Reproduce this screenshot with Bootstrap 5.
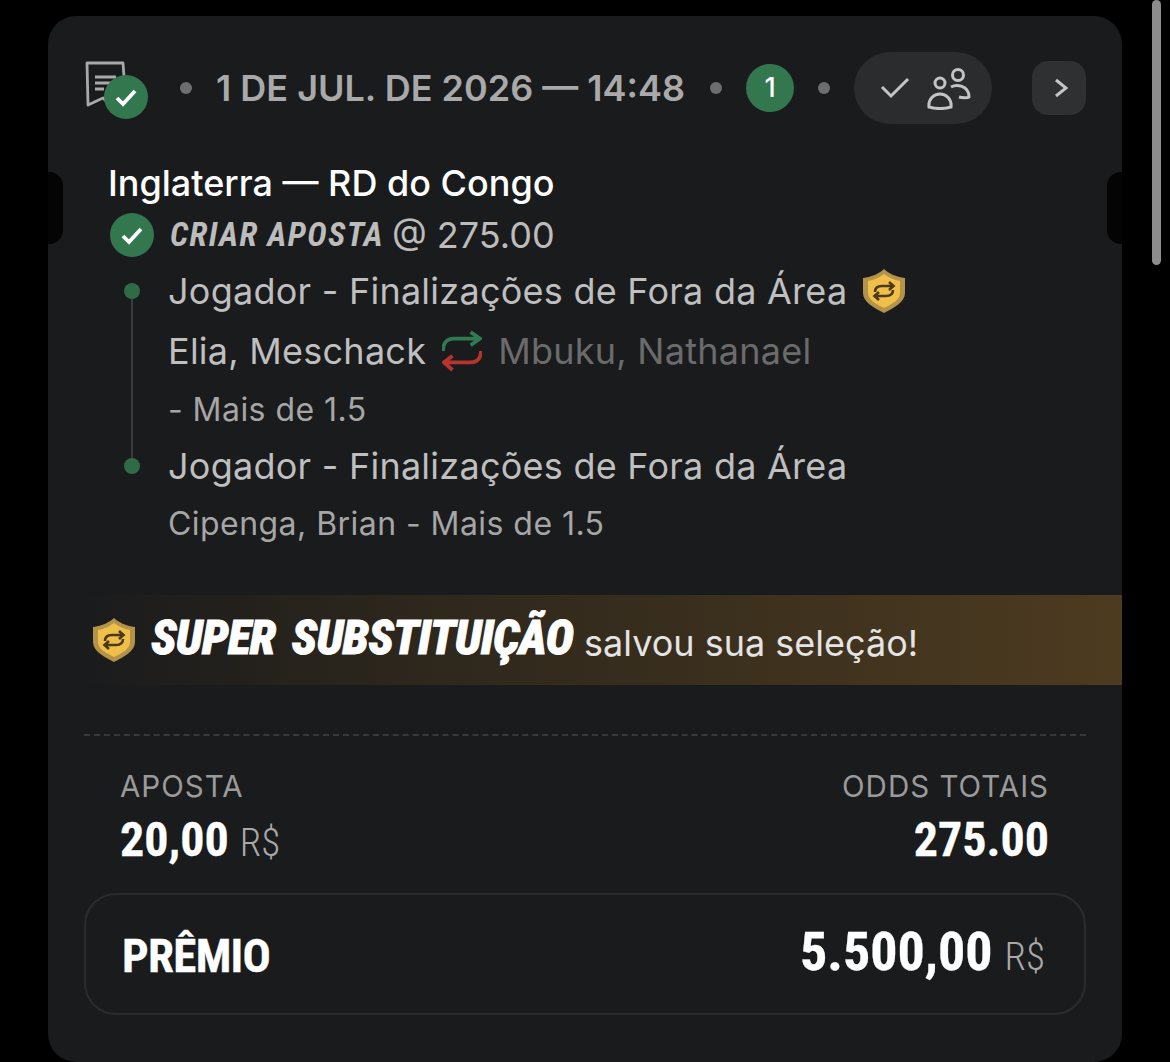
<!DOCTYPE html>
<html lang="pt-br">
<head>
    <meta charset="UTF-8">
    <meta name="viewport" content="width=device-width, initial-scale=1.0">
    <title>Aposta</title>
    <link href="https://cdn.jsdelivr.net/npm/bootstrap@5.3.0/dist/css/bootstrap.min.css" rel="stylesheet">
    <style>
        body { background: #000; font-family: Inter, "Liberation Sans", sans-serif; overflow: hidden; }
        .bet-card { position: relative; width: 1074px; height: 1046px; margin: 16px 0 0 48px; padding: 36px 36px 48px; background: #1a1b1d; border-radius: 28px; overflow: hidden; }
        .notch { position: absolute; top: 156px; width: 15px; height: 72px; background: #040404; }
        .notch-l { left: 0; border-radius: 0 14px 14px 0; }
        .notch-r { right: 0; border-radius: 14px 0 0 14px; }
        .page-scroll { position: absolute; left: 1152px; top: 0; width: 9px; height: 265px; background: #8c8c8c; border-radius: 5px; }

        .top-row { height: 72px; }
        .sep { width: 12px; height: 12px; border-radius: 50%; background: #6b6f72; flex: none; margin-left: 24px; }
        .sep-first { margin-left: 30px; margin-right: 24px; }
        .sep-mid { margin-left: 25px; }
        .date-txt { font-size: 36px; font-weight: 600; color: #a9a9a9; white-space: nowrap; }
        .num-dot { width: 48px; height: 48px; margin-left: 24px; border-radius: 50%; background: #33774f; color: #fff; font-size: 27px; font-weight: 500; }
        .share-pill { width: 138px; height: 72px; margin-left: 24px; padding-left: 8px; border-radius: 36px; background: #2a2c2e; }
        .next-btn { width: 54px; height: 54px; padding-left: 3px; border-radius: 16px; background: #2e3032; }

        .match-title { margin: 35px 0 0 24px; font-size: 36px; line-height: 48px; font-weight: 500; color: #fff; }
        .market-row { height: 55px; margin-left: 26px; }
        .market-name { font-family: "Roboto Condensed", "Liberation Sans Narrow", sans-serif; font-stretch: condensed; font-style: italic; font-weight: 700; font-size: 33px; color: #bcbcbc; letter-spacing: 1.350px; }
        .market-odd { font-size: 36px; color: #bcbcbc; }

        .leg { margin-left: 24px; }
        .rail { width: 48px; flex: none; }
        .rail-dot { width: 16px; height: 16px; border-radius: 50%; background: #2f6b47; margin-top: 21px; flex: none; }
        .rail-line { width: 2px; flex-grow: 1; background: #3a3c3e; }
        .rail-top { flex: none; height: 20px; }
        .rail-dot-low { margin-top: 0; }
        .leg-body { margin-left: 12px; }
        .leg-line { height: 58px; font-size: 36px; letter-spacing: .25px; color: #bfbfbf; white-space: nowrap; }
        .leg-tall { height: 62px; }
        .leg-short { height: 56px; }
        .leg-last { height: 60px; }
        .leg-sub { font-size: 32px; letter-spacing: .45px; color: #a6a6a6; }
        .leg-off { color: #6b6b6b; }

        .super-banner { height: 90px; margin: 41px -36px 0 -9px; padding-left: 18px; background: linear-gradient(90deg, #1a1b1d 0%, #2c261c 30%, #4d3b20 100%); }
        .super-name { margin-bottom: 5px; font-family: "Roboto Condensed", "Liberation Sans Narrow", sans-serif; font-stretch: condensed; font-style: italic; font-weight: 900; font-size: 48px; color: #fff; letter-spacing: -.8px; word-spacing: 6px; -webkit-text-stroke: .8px #fff; }
        .super-rest { margin-top: 6px; margin-left: 11px; font-size: 36px; color: #e4e4e4; }

        .dash-line { margin-top: 49px; border-top: 2px dashed #37393b; }
        .stats { padding: 32px 37px 0 36px; }
        .stat-label { font-size: 29.500px; line-height: 36px; color: #9a9a9a; letter-spacing: 1px; }
        .stat-value { height: 66px; gap: 11px; }
        .big-num { font-family: "Roboto Condensed", "Liberation Sans Narrow", sans-serif; font-stretch: condensed; font-weight: 700; font-size: 48px; color: #fff; -webkit-text-stroke: .3px #fff; }
        .cur { font-family: "Roboto Condensed", "Liberation Sans Narrow", sans-serif; font-stretch: condensed; font-weight: 300; font-size: 39px; color: #a8a8a8; }
        .prize-box { height: 122px; margin-top: 23px; padding: 0 39px 0 36px; border: 2px solid #2a2c2e; border-radius: 32px; }
        .prize-name { margin-top: 4px; font-family: "Roboto Condensed", "Liberation Sans Narrow", sans-serif; font-stretch: condensed; font-weight: 700; font-size: 47px; letter-spacing: -.7px; color: #fff; -webkit-text-stroke: .3px #fff; }
        .prize-amount { gap: 12px; padding-bottom: 6px; }
        .prize-num { font-size: 54px; }
    </style>
</head>
<body>
    <svg width="0" height="0" class="d-block">
        <symbol id="shield" viewBox="0 0 42 44">
            <path d="M21 0C25 4 33 8 42 9V24C42 33 31 39 21 44C11 39 0 33 0 24V9C9 8 17 4 21 0Z" fill="#b3924a"/>
            <path d="M21 5C25 8 31 11 37 12V24C37 31 29 35 21 39C13 35 5 31 5 24V12C11 11 17 8 21 5Z" fill="#efbf4a"/>
            <path d="M12 23C12 18 15 17 19 17H30M26 13L30.500 17L26 21M30 21C30 26 27 27 23 27H12M16 23L11.500 27L16 31" fill="none" stroke="#4a3a14" stroke-width="2.600"/>
        </symbol>
        <symbol id="okdot" viewBox="0 0 44 44">
            <circle cx="22" cy="22" r="22" fill="#33774f"/>
            <path d="M13 23L19 29L31 16" fill="none" stroke="#fff" stroke-width="3.800"/>
        </symbol>
    </svg>

    <div class="page-scroll"></div>

    <div class="bet-card">
        <div class="notch notch-l"></div>
        <div class="notch notch-r"></div>

        <!-- cabecalho -->
        <div class="top-row d-flex align-items-center">
            <svg width="66" height="64" viewBox="0 0 66 64" class="flex-shrink-0">
                <path d="M3 7H39L41 34L28 38L24 47L19 42L4 49Z" fill="none" stroke="#a9a9a9" stroke-width="2.800" stroke-linejoin="round"/>
                <path d="M11 21H32M11 27H28M11 33H20" stroke="#a9a9a9" stroke-width="3"/>
                <use href="#okdot" x="20" y="19" width="44" height="44"/>
            </svg>
            <span class="sep sep-first"></span>
            <span class="date-txt">1 DE JUL. DE 2026 — 14:48</span>
            <span class="sep sep-mid"></span>
            <span class="num-dot d-flex align-items-center justify-content-center">1</span>
            <span class="sep"></span>
            <span class="share-pill d-flex align-items-center justify-content-center gap-3">
                <svg width="30" height="24" viewBox="0 0 30 24"><path d="M2 11L11 20L28 3" fill="none" stroke="#c4c4c4" stroke-width="3"/></svg>
                <svg width="48" height="44" viewBox="0 0 48 44" fill="none" stroke="#c4c4c4" stroke-width="3">
                    <circle cx="14" cy="17" r="5"/>
                    <path d="M3 41C2 33 8 28 14 28C20 28 26 33 25 41C18 43 10 43 3 41Z"/>
                    <circle cx="32" cy="9" r="5.500"/>
                    <path d="M25 21C30 18 43 19 43 31C42 32 36 32 33 31"/>
                </svg>
            </span>
            <span class="next-btn d-flex align-items-center justify-content-center ms-auto">
                <svg width="14" height="20" viewBox="0 0 14 20"><path d="M2 2L12 10L2 18" fill="none" stroke="#c4c4c4" stroke-width="3"/></svg>
            </span>
        </div>

        <div class="match-title">Inglaterra — RD do Congo</div>

        <div class="market-row d-flex align-items-center">
            <svg width="44" height="44" viewBox="0 0 44 44"><use href="#okdot"/></svg>
            <span class="market-name ms-3">CRIAR APOSTA</span>
            <span class="market-odd ms-2">@ 275.00</span>
        </div>

        <!-- selecoes -->
        <div class="leg d-flex">
            <div class="rail d-flex flex-column align-items-center">
                <span class="rail-dot"></span>
                <span class="rail-line"></span>
            </div>
            <div class="leg-body">
                <div class="leg-line d-flex align-items-center">
                    Jogador - Finalizações de Fora da Área
                    <svg width="42" height="44" class="ms-3"><use href="#shield"/></svg>
                </div>
                <div class="leg-line leg-tall d-flex align-items-center">
                    Elia, Meschack
                    <svg width="40" height="42" viewBox="0 0 42 42" fill="none" stroke-width="4" class="mx-3">
                        <path d="M1 21C1 12 6 8 12 8H40M30 1L40 8L30 15" stroke="#2f7a50"/>
                        <path d="M41 21C41 28 37 33 30 33H2M11 26L2 33L11 41" stroke="#b5342e"/>
                    </svg>
                    <span class="leg-off">Mbuku, Nathanael</span>
                </div>
                <div class="leg-line leg-sub leg-short d-flex align-items-center">- Mais de 1.5</div>
            </div>
        </div>
        <div class="leg d-flex">
            <div class="rail d-flex flex-column align-items-center">
                <span class="rail-line rail-top"></span>
                <span class="rail-dot rail-dot-low"></span>
            </div>
            <div class="leg-body">
                <div class="leg-line leg-short d-flex align-items-center">Jogador - Finalizações de Fora da Área</div>
                <div class="leg-line leg-sub leg-last d-flex align-items-center">Cipenga, Brian - Mais de 1.5</div>
            </div>
        </div>

        <div class="super-banner d-flex align-items-center">
            <svg width="42" height="44" class="flex-shrink-0"><use href="#shield"/></svg>
            <span class="d-flex align-items-center">
                <span class="super-name ms-3">SUPER SUBSTITUIÇÃO</span>
                <span class="super-rest">salvou sua seleção!</span>
            </span>
        </div>

        <div class="dash-line"></div>

        <div class="stats d-flex justify-content-between">
            <div>
                <div class="stat-label">APOSTA</div>
                <div class="stat-value d-flex align-items-baseline"><span class="big-num">20,00</span><span class="cur">R$</span></div>
            </div>
            <div class="text-end">
                <div class="stat-label">ODDS TOTAIS</div>
                <div class="stat-value"><span class="big-num">275.00</span></div>
            </div>
        </div>

        <div class="prize-box d-flex align-items-center justify-content-between">
            <span class="prize-name">PRÊMIO</span>
            <span class="prize-amount d-flex align-items-baseline"><span class="big-num prize-num">5.500,00</span><span class="cur">R$</span></span>
        </div>
    </div>

    <script src="https://cdn.jsdelivr.net/npm/bootstrap@5.3.0/dist/js/bootstrap.bundle.min.js"></script>
</body>
</html>
